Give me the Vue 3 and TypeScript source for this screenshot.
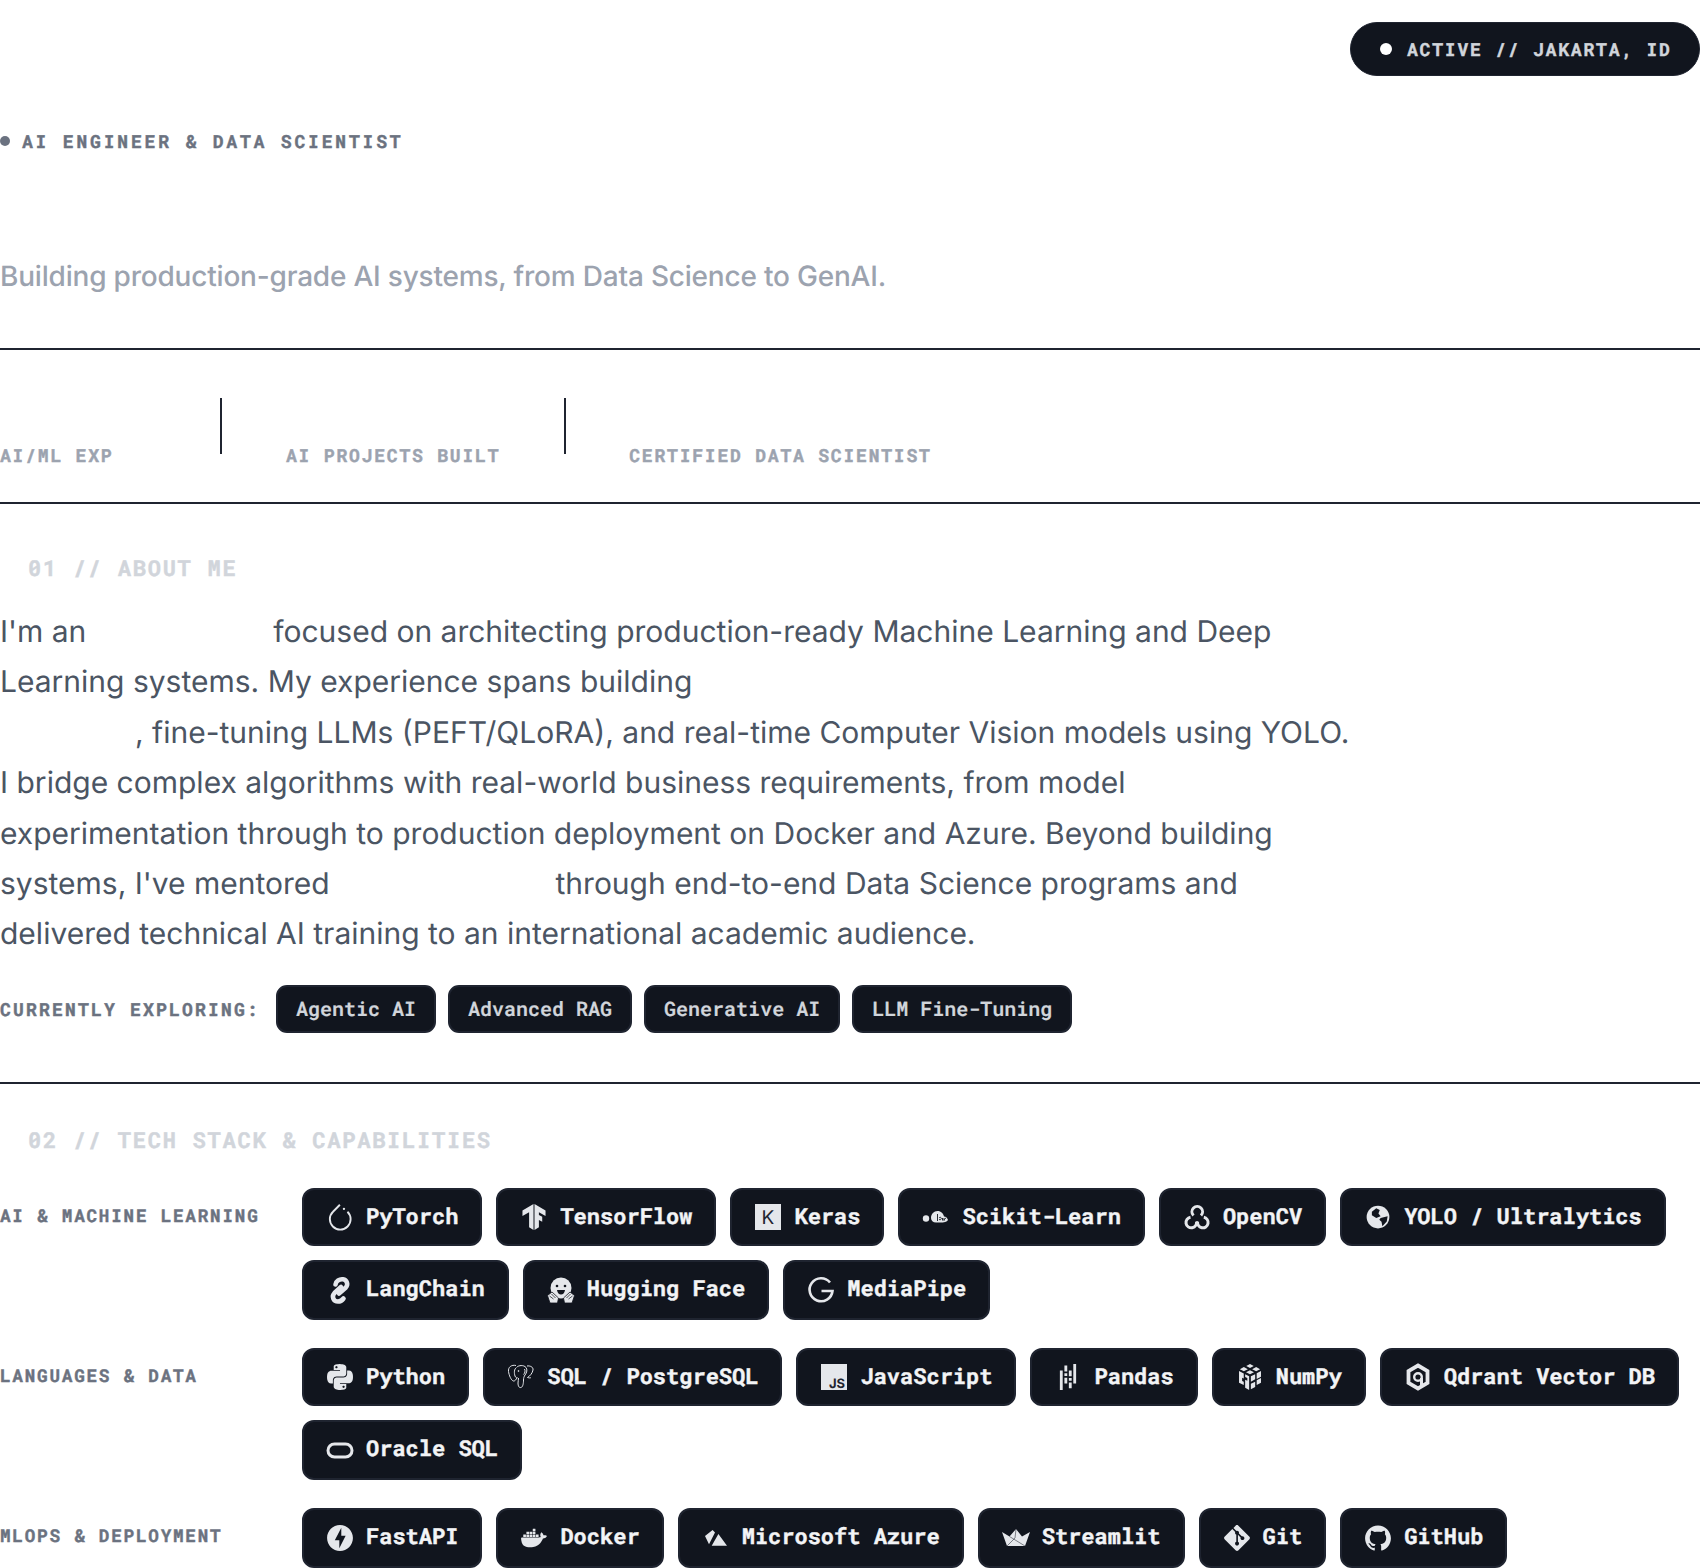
<script setup lang="ts">
interface Chip { name: string; tall?: boolean; vb?: string; body: string }
const F = 'fill="#e5e7eb"'
const S = 'fill="none" stroke="#e5e7eb"'
const explore: string[] = ['Agentic AI', 'Advanced RAG', 'Generative AI', 'LLM Fine-Tuning']
const ai: Chip[] = [
  { name: 'PyTorch', vb: '0 0 24 24', body: `<path ${S} stroke-width="1.600" d="M11.900 1.500 6 7.500a8.900 8.900 0 1 0 12.400 0"/><circle ${F} cx="15.400" cy="5" r="1"/>` },
  { name: 'TensorFlow', vb: '-1 -1 26 26', body: `<path ${F} d="M1.292 5.856 11.54 0v24l-4.095-2.378V7.603l-6.168 3.564.015-5.31zm21.43 5.311-.014-5.31L12.46 0v24l4.095-2.378V14.71l3.092 1.788-.018-4.618-3.074-1.756V7.603l6.168 3.564z"/>` },
  { name: 'Keras', vb: '0 0 28 28', body: `<rect ${F} x="1" y="1" width="26" height="26"/><text x="14" y="21" text-anchor="middle" font-family="Inter, sans-serif" font-weight="400" font-size="19" fill="#1f2430" stroke="none">K</text>` },
  { name: 'Scikit-Learn', vb: '0 0 28 28', body: `<circle ${F} cx="4" cy="15.500" r="3.200"/><path ${F} d="M9 15c0-4 3-7 6.500-7s6 2.500 6.500 5.500c2 .2 3.500 1.500 4 3.500-1 2-4 2.500-8 2.500H14c-3 0-5-2-5-4.500z"/><path fill="none" stroke="#11151e" stroke-width=".9" d="M15.500 11v7M17 15c1-1 2-1 2.300.5 0 1-1 1.500-2.300 1M20.500 15v2.500M22 15v2.500c.5-2 1.500-2.500 2-2"/>` },
  { name: 'OpenCV', vb: '0 0 28 28', body: `<g ${S} stroke-width="3"><path d="M10.500 12.500a5.300 5.300 0 1 1 7.500 0"/><path d="M13.500 18.500a5.300 5.300 0 1 1-6-4.200"/><path d="M20.800 14.300a5.300 5.300 0 1 1-6.200 4.200"/></g>` },
  { name: 'YOLO / Ultralytics', vb: '-2 -2 32 32', body: `<circle ${F} cx="14" cy="14" r="13"/><path fill="#11151e" d="M7 8 12 4l4 2-1.500 4 2.500 3-5 2-5-3zM17 15l8-2-1 6-5 5.500-1-5-2.500-2.500z"/>` },
  { name: 'LangChain', tall: true, vb: '0 0 28 28', body: `<g ${S} stroke-width="4.600" stroke-linecap="round"><path d="M9.500 8.500C10 5 13.500 2.800 17 3.300 21 4 22.500 8.500 19.800 11.500L13 17.500"/><path d="M15 11 8.500 17C5.200 20.500 7.500 25.500 12 25.500 14 25.500 16 24.500 17.500 22.500"/></g>` },
  { name: 'Hugging Face', tall: true, vb: '0 0 28 28', body: `<circle ${F} cx="14" cy="12" r="10.500"/><circle fill="#11151e" cx="10" cy="10" r="1.300"/><circle fill="#11151e" cx="18" cy="10" r="1.300"/><path fill="#11151e" d="M10 14h8c-.5 3-2 4.500-4 4.500s-3.500-1.500-4-4.500z"/><g ${F} stroke="#11151e" stroke-width=".8"><path d="M.5 19.500 5 16l6.500 6-1 5H3z"/><path d="M27.500 19.500 23 16l-6.500 6 1 5H25z"/></g><path fill="none" stroke="#11151e" stroke-width=".7" d="M2.500 20l4 3M4.500 18l4 4M25.500 20l-4 3M23.500 18l-4 4"/>` },
  { name: 'MediaPipe', tall: true, vb: '0 0 28 28', body: `<path ${S} stroke-width="2.600" d="M23 6.500A11.500 11.500 0 1 0 25.500 15H14.500"/>` },
]
const lang: Chip[] = [
  { name: 'Python', vb: '-1 -1 26 26', body: `<path ${F} d="m14.250.18.9.2.73.26.59.3.45.32.34.34.25.34.16.33.1.3.04.26.02.2-.01.13V8.500l-.05.63-.13.55-.21.46-.26.38-.3.31-.33.25-.35.19-.35.14-.33.1-.3.07-.26.04-.21.02H8.770l-.69.05-.59.14-.5.22-.41.27-.33.32-.27.35-.2.36-.15.37-.1.35-.07.32-.04.27-.02.21v3.060H3.170l-.21-.03-.28-.07-.32-.12-.35-.18-.36-.26-.36-.36-.35-.46-.32-.59-.28-.73-.21-.88-.14-1.050-.05-1.230.06-1.220.16-1.040.24-.87.32-.71.36-.57.4-.44.42-.33.42-.24.4-.16.36-.1.32-.05.24-.01h.16l.06.01h8.160v-.83H6.180l-.01-2.750-.02-.37.05-.34.11-.31.17-.28.25-.26.31-.23.38-.2.44-.18.51-.15.58-.12.64-.1.71-.06.77-.04.84-.02 1.270.05zm-6.300 1.980-.23.33-.08.41.08.41.23.34.33.22.41.09.41-.09.33-.22.23-.34.08-.41-.08-.41-.23-.33-.33-.22-.41-.09-.41.09zm13.090 3.950.28.06.32.12.35.18.36.27.36.35.35.47.32.59.28.73.21.88.14 1.040.05 1.230-.06 1.230-.16 1.040-.24.86-.32.71-.36.57-.4.45-.42.33-.42.24-.4.16-.36.09-.32.05-.24.02-.16-.01h-8.220v.82h5.840l.01 2.760.02.36-.05.34-.11.31-.17.29-.25.25-.31.24-.38.2-.44.17-.51.15-.58.13-.64.09-.71.07-.77.04-.84.01-1.270-.04-1.070-.14-.9-.2-.73-.25-.59-.3-.45-.33-.34-.34-.25-.34-.16-.33-.1-.3-.04-.25-.02-.2.01-.13v-5.340l.05-.64.13-.54.21-.46.26-.38.3-.32.33-.24.35-.2.35-.14.33-.1.3-.06.26-.04.21-.02.13-.01h5.840l.69-.05.59-.14.5-.21.41-.28.33-.32.27-.35.2-.36.15-.36.1-.35.07-.32.04-.28.02-.21V6.070h2.090l.14.01zm-6.470 14.250-.23.33-.08.41.08.41.23.33.33.23.41.08.41-.08.33-.23.23-.33.08-.41-.08-.41-.23-.33-.33-.23-.41-.08-.41.08z"/>` },
  { name: 'SQL / PostgreSQL', vb: '0 0 28 28', body: `<g ${S} stroke-width="1"><path d="M9 2.500C4.500 1.500 1 4 1.500 8.500c.5 3.500 2.500 9 5 9.500 1.500.2 2.500-1.500 3.500-3"/><path d="M10 4c1.500-1.500 6.500-2.500 9 .5 1.500 2 1 5-1 7.500-1 1.500-1.500 3-1.500 5 0 3-.5 7-2.500 7.500s-3-1.500-3-4.500c0-2 .5-3 .5-5"/><path d="M20 3c3-.5 6.500 1 6 4-.5 3-3 6-5.500 7.500"/><path d="M9.500 4.500C7 6 7 10 8 13c.5 1.500 1.500 2 2.500 1.500"/><path d="M17.500 6c1 2 .5 4-1 5.500"/><path d="M20.500 14.500c1.500.5 3 .5 3.500 0"/><circle cx="11.500" cy="8" r=".5"/></g>` },
  { name: 'JavaScript', vb: '0 0 28 28', body: `<rect ${F} x="1" y="1" width="26" height="26"/><text x="25" y="25" text-anchor="end" font-family="Inter, sans-serif" font-weight="700" font-size="13" fill="#1f2430" stroke="none">JS</text>` },
  { name: 'Pandas', vb: '-1 -1 26 26', body: `<path ${F} d="M16.922 0h2.623v18.104h-2.623zm-4.126 12.940h2.623v2.570h-2.623zm0-7.037h2.623v5.446h-2.623zm0 11.197h2.623v5.446h-2.623zM4.456 5.896h2.622V24H4.455zm4.213 2.559h2.623v2.570H8.670zm0 4.151h2.623v5.447H8.670zm0-11.187h2.623v5.446H8.670Z"/>` },
  { name: 'NumPy', vb: '-1 -1 26 26', body: `<path ${F} d="M12 0l3.500 1.800L12 3.600 8.500 1.800zM6.300 2.800l3.700 1.900-3.700 1.900-3.700-1.900zM17.700 2.800l3.700 1.900-3.700 1.900-3.700-1.900zM12 5.700l3.700 1.900L12 9.500 8.300 7.600zM1.800 6.500l4.400 2.300v4.700l-1.500-.8v3l1.500.8v3L1.800 17.300zM7.500 9.500l3.700 1.900V24l-3.700-2V14.500l2 1V13l-2-1zM22.200 6.500v5.200l-4 2.100V8.600zM12.800 11.400l4-2v4.800l-4 2.100zM22.200 13v4.300l-4 2.100V15zM16.800 16.300v4.900l-4 2.100v-5z"/>` },
  { name: 'Qdrant Vector DB', vb: '0 0 28 28', body: `<path ${S} stroke-width="3.800" d="M14 2.500 23.500 8v12L14 25.500 4.500 20V8z"/><circle ${S} stroke-width="2.400" cx="14" cy="14" r="3.800"/><path ${F} d="M16 15h3v8L16 24.500z"/>` },
  { name: 'Oracle SQL', tall: true, vb: '0 0 28 28', body: `<rect ${S} stroke-width="3" x="2" y="8" width="24" height="13" rx="6.500"/>` },
]
const ops: Chip[] = [
  { name: 'FastAPI', tall: true, vb: '-1 -1 26 26', body: `<path ${F} fill-rule="evenodd" d="M12 0C5.375 0 0 5.375 0 12c0 6.627 5.375 12 12 12 6.626 0 12-5.373 12-12 0-6.625-5.373-12-12-12zm-.624 21.620v-7.528H7.190L13.203 2.380v7.528h4.029L11.376 21.620z"/>` },
  { name: 'Docker', tall: true, vb: '-1 -1 26 26', body: `<path ${F} d="M13.983 11.078h2.119a.186.186 0 0 0 .186-.185V9.006a.186.186 0 0 0-.186-.186h-2.119a.185.185 0 0 0-.185.185v1.888c0 .102.083.185.185.185m-2.954-5.430h2.118a.186.186 0 0 0 .186-.186V3.574a.186.186 0 0 0-.186-.185h-2.118a.185.185 0 0 0-.185.185v1.888c0 .102.082.185.185.186m0 2.716h2.118a.187.187 0 0 0 .186-.186V6.290a.186.186 0 0 0-.186-.185h-2.118a.185.185 0 0 0-.185.185v1.887c0 .102.082.185.185.186m-2.930 0h2.120a.186.186 0 0 0 .184-.186V6.290a.185.185 0 0 0-.185-.185H8.100a.185.185 0 0 0-.185.185v1.887c0 .102.083.185.185.186m-2.964 0h2.119a.186.186 0 0 0 .185-.186V6.290a.185.185 0 0 0-.185-.185H5.136a.186.186 0 0 0-.186.185v1.887c0 .102.084.185.186.186m5.893 2.715h2.118a.186.186 0 0 0 .186-.185V9.006a.186.186 0 0 0-.186-.186h-2.118a.185.185 0 0 0-.185.185v1.888c0 .102.082.185.185.185m-2.930 0h2.120a.185.185 0 0 0 .184-.185V9.006a.185.185 0 0 0-.184-.186h-2.120a.185.185 0 0 0-.184.185v1.888c0 .102.083.185.185.185m-2.964 0h2.119a.185.185 0 0 0 .185-.185V9.006a.185.185 0 0 0-.184-.186h-2.120a.186.186 0 0 0-.186.186v1.887c0 .102.084.185.186.185m-2.920 0h2.120a.185.185 0 0 0 .184-.185V9.006a.185.185 0 0 0-.184-.186h-2.120a.185.185 0 0 0-.184.185v1.888c0 .102.082.185.185.185M23.763 9.890c-.065-.051-.672-.51-1.954-.51-.338.001-.676.03-1.010.087-.248-1.700-1.653-2.530-1.716-2.566l-.344-.199-.226.327c-.284.438-.49.922-.612 1.430-.23.97-.09 1.882.403 2.661-.595.332-1.550.413-1.744.42H.751a.751.751 0 0 0-.75.748 11.376 11.376 0 0 0 .692 4.062c.545 1.428 1.355 2.480 2.410 3.124 1.180.723 3.100 1.137 5.275 1.137.983.003 1.963-.086 2.930-.266a12.248 12.248 0 0 0 3.823-1.389c.98-.567 1.860-1.288 2.610-2.136 1.252-1.418 1.998-2.997 2.553-4.400h.221c1.372 0 2.215-.549 2.680-1.009.309-.293.55-.65.707-1.046l.098-.288Z"/>` },
  { name: 'Microsoft Azure', tall: true, vb: '0 0 28 28', body: `<path ${F} d="M3 12 10.600 6 13 8.500 7 20.300zM16.400 10 25 21.700H9.700z"/>` },
  { name: 'Streamlit', tall: true, vb: '0 0 28 28', body: `<path ${F} d="M0 8l7.500 4.500L14 5l6 7.500L28 8 23 22H5z"/><path fill="none" stroke="#11151e" stroke-width=".5" d="M7.500 12.500 23 22M14 5l-1 9M5 22l8-8"/>` },
  { name: 'Git', tall: true, vb: '-1 -1 26 26', body: `<path ${F} d="M23.546 10.930 13.067.452c-.604-.603-1.582-.603-2.188 0L8.708 2.627l2.760 2.760c.645-.215 1.379-.07 1.889.441.516.515.658 1.258.438 1.900l2.658 2.660c.645-.223 1.387-.078 1.900.435.721.72.721 1.884 0 2.604-.719.719-1.881.719-2.600 0-.539-.541-.674-1.337-.404-1.996L12.860 8.955v6.525c.176.086.342.203.488.348.713.721.713 1.883 0 2.600-.719.721-1.889.721-2.609 0-.719-.719-.719-1.879 0-2.598.182-.18.387-.316.605-.406V8.835c-.217-.091-.424-.222-.6-.401-.545-.545-.676-1.342-.396-2.009L7.636 3.700.45 10.881c-.6.605-.6 1.584 0 2.189l10.480 10.477c.604.604 1.582.604 2.186 0l10.430-10.430c.605-.603.605-1.582 0-2.187"/>` },
  { name: 'GitHub', tall: true, vb: '-1 -1 26 26', body: `<path ${F} d="M12 .297c-6.630 0-12 5.373-12 12 0 5.303 3.438 9.800 8.205 11.385.6.113.82-.258.82-.577 0-.285-.01-1.040-.015-2.040-3.338.724-4.042-1.610-4.042-1.610C4.422 18.070 3.633 17.700 3.633 17.700c-1.087-.744.084-.729.084-.729 1.205.084 1.838 1.236 1.838 1.236 1.070 1.835 2.809 1.305 3.495.998.108-.776.417-1.305.76-1.605-2.665-.3-5.466-1.332-5.466-5.930 0-1.310.465-2.380 1.235-3.220-.135-.303-.54-1.523.105-3.176 0 0 1.005-.322 3.300 1.230.96-.267 1.980-.399 3-.405 1.020.006 2.040.138 3 .405 2.280-1.552 3.285-1.230 3.285-1.230.645 1.653.24 2.873.12 3.176.765.84 1.230 1.910 1.230 3.220 0 4.610-2.805 5.625-5.475 5.920.42.36.81 1.096.81 2.220 0 1.606-.015 2.896-.015 3.286 0 .315.21.69.825.57C20.565 22.092 24 17.592 24 12.297c0-6.627-5.373-12-12-12"/>` },
]
const groups = [
  { label: 'AI & MACHINE LEARNING', chips: ai },
  { label: 'LANGUAGES & DATA', chips: lang },
  { label: 'MLOPS & DEPLOYMENT', chips: ops },
]
</script>

<template>
  <div class="page">
    <header class="top">
      <div class="pill"><span class="pill-dot"></span>ACTIVE // JAKARTA, ID</div>
    </header>
    <div class="tagline"><span class="tag-dot"></span>AI ENGINEER &amp; DATA SCIENTIST</div>
    <p class="subtitle">Building production-grade AI systems, from Data Science to GenAI.</p>

    <section class="stats">
      <div class="stat stat-first">AI/ML EXP</div>
      <div class="stat-rule"></div>
      <div class="stat">AI PROJECTS BUILT</div>
      <div class="stat-rule stat-rule-b"></div>
      <div class="stat">CERTIFIED DATA SCIENTIST</div>
    </section>

    <section class="about">
      <h2 class="section-title">01 // ABOUT ME</h2>
      <p class="bio">I'm an <span class="gap gap-a"></span> focused on architecting production-ready Machine Learning and Deep Learning systems. My experience spans building<br><span class="gap gap-b"></span>, fine-tuning LLMs (PEFT/QLoRA), and real-time Computer Vision models using YOLO. I bridge complex algorithms with real-world business requirements, from model experimentation through to production deployment on Docker and Azure. Beyond building systems, I've mentored <span class="gap gap-c"></span> through end-to-end Data Science programs and delivered technical AI training to an international academic audience.</p>
      <div class="explore">
        <span class="explore-label">CURRENTLY EXPLORING:</span>
        <span v-for="e in explore" :key="e" class="explore-chip">{{ e }}</span>
      </div>
    </section>

    <section class="tech">
      <h2 class="section-title">02 // TECH STACK &amp; CAPABILITIES</h2>
      <div v-for="g in groups" :key="g.label" class="group">
        <div class="group-label">{{ g.label }}</div>
        <div class="chips">
          <div v-for="c in g.chips" :key="c.name" class="chip" :class="{ tall: c.tall }">
            <svg class="icon" :viewBox="c.vb" v-html="c.body"></svg>
            <span class="chip-name">{{ c.name }}</span>
          </div>
        </div>
      </div>
    </section>
  </div>
</template>

<style>
html, body { background: #fff; }
</style>

<style scoped>
.page {
  width: 1700px;
  height: 1568px;
  overflow: hidden;
  background: #fff;
  font-family: "Inter", sans-serif;
  text-rendering: geometricPrecision;
  --mono: "Roboto Mono", "JetBrains Mono", "Liberation Mono", monospace;
}
.top { display: flex; justify-content: flex-end; padding-top: 22px; }
.pill {
  width: 350px;
  height: 54px;
  box-sizing: border-box;
  display: flex;
  align-items: center;
  padding-left: 29px;
  gap: 15px;
  background: #11151e;
  border: 1px solid #1f2430;
  border-radius: 27px;
  color: #d1d5db;
  font: 700 18px/1 var(--mono);
  letter-spacing: 1.8px;
  -webkit-text-stroke: 0.4px currentColor;
}
.pill-dot { width: 12px; height: 12px; border-radius: 50%; background: #fff; }
.tagline {
  margin-top: 51px;
  height: 28px;
  display: flex;
  align-items: center;
  gap: 12px;
  color: #6b7280;
  font: 700 18px/28px var(--mono);
  letter-spacing: 2.82px;
  -webkit-text-stroke: 0.4px currentColor;
}
.tag-dot { width: 10px; height: 10px; border-radius: 50%; background: #6b7280; }
.subtitle {
  margin: 100px 0 0;
  color: #9ca3af;
  font-size: 28px;
  font-weight: 500;
  line-height: 42px;
  height: 93px;
  letter-spacing: -0.2px;
}
.stats {
  display: flex;
  gap: 64px;
  height: 156px;
  box-sizing: border-box;
  border-top: 2px solid #1f2430;
  border-bottom: 2px solid #1f2430;
  padding-top: 48px;
}
.stat {
  padding-top: 47px;
  height: 20px;
  color: #9ca3af;
  font: 700 18px/20px var(--mono);
  letter-spacing: 1.8px;
  -webkit-text-stroke: 0.4px currentColor;
}
.stat-first { width: 156px; }
.stat-rule { width: 2px; height: 56px; background: #1f2430; }
.stat-rule-b { margin-right: -1px; }
.about { padding-top: 50px; }
.section-title {
  margin: 0;
  padding-left: 28px;
  color: #d1d5db;
  font: 700 22px/28px var(--mono);
  letter-spacing: 1.76px;
  -webkit-text-stroke: 0.4px currentColor;
}
.bio {
  margin: 25px 0 0;
  max-width: 1356px;
  color: #4b5563;
  font-size: 30px;
  line-height: 50.4px;
}
.gap { display: inline-block; height: 1px; }
.gap-a { width: 170px; }
.gap-b { width: 135px; }
.gap-c { width: 209px; }
.explore { display: flex; align-items: center; gap: 12px; margin-top: 25px; }
.explore-label {
  margin-right: 4px;
  color: #6b7280;
  font: 700 18px/1 var(--mono);
  letter-spacing: 2.2px;
  -webkit-text-stroke: 0.4px currentColor;
}
.explore-chip {
  box-sizing: border-box;
  height: 48px;
  display: flex;
  align-items: center;
  padding: 0 18px;
  background: #11151e;
  border: 2px solid #1f2430;
  border-radius: 11px;
  color: #d1d5db;
  font: 600 20px/1 var(--mono);
  -webkit-text-stroke: 0.2px currentColor;
}
.tech { margin-top: 49px; border-top: 2px solid #1f2430; padding-top: 42px; }
.group { display: flex; align-items: flex-start; margin-bottom: 28px; }
.tech .section-title { margin-bottom: 34px; }
.group-label {
  width: 302px;
  flex: none;
  padding-top: 17px;
  color: #6b7280;
  font: 700 17.6px/22px var(--mono);
  letter-spacing: 1.8px;
  -webkit-text-stroke: 0.4px currentColor;
}
.chips { display: flex; flex-wrap: wrap; gap: 14px; }
.chip {
  box-sizing: border-box;
  height: 58px;
  display: flex;
  align-items: center;
  gap: 12px;
  padding: 0 22px;
  background: #11151e;
  border: 2px solid #1f2430;
  border-radius: 12px;
  color: #f3f4f6;
  font: 700 22px/1 var(--mono);
  -webkit-text-stroke: 0.4px currentColor;
}
.chip.tall { height: 60px; }
.chip-name { margin-bottom: 2px; }
.tall .chip-name { margin-bottom: 4px; }
.icon { width: 28px; height: 28px; flex: none; }
</style>
